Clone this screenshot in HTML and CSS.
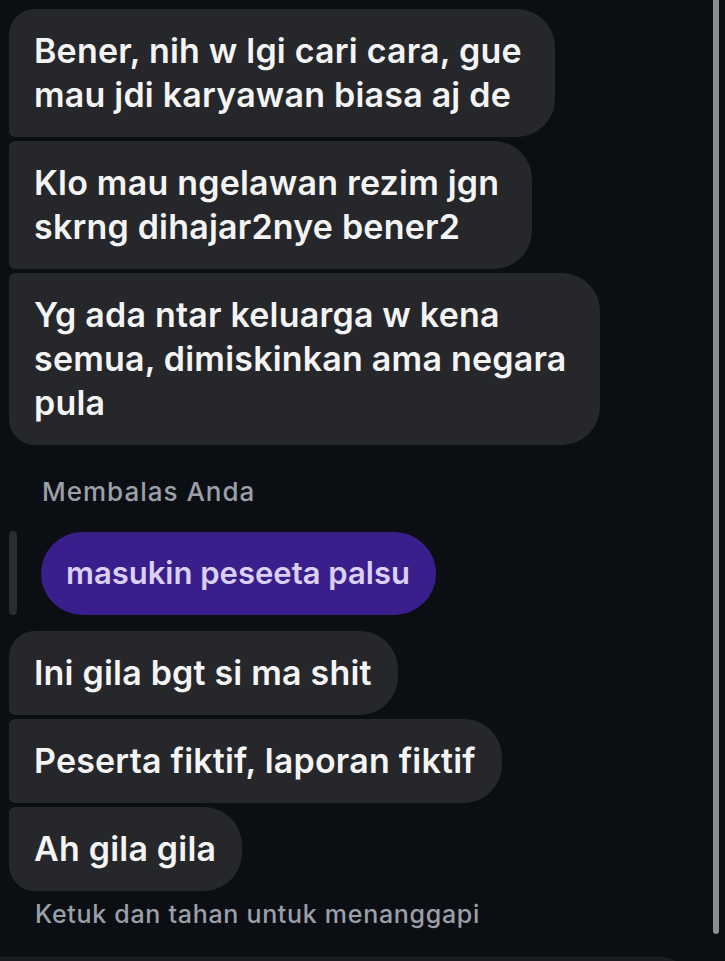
FILE: index.html
```html
<!DOCTYPE html>
<html lang="id">
<head>
    <meta charset="UTF-8">
    <meta name="viewport" content="width=device-width, initial-scale=1.0">
    <title>Pesan</title>
    <link rel="stylesheet" href="styles.css">
</head>
<body>
    <div class="thread">
        <div class="bubble first multi">Bener, nih w lgi cari cara, gue<br>mau jdi karyawan biasa aj de</div>
        <div class="bubble multi">Klo mau ngelawan rezim jgn<br>skrng dihajar2nye bener2</div>
        <div class="bubble last multi">Yg ada ntar keluarga w kena<br>semua, dimiskinkan ama negara<br>pula</div>

        <div class="reply-label">Membalas Anda</div>
        <div class="reply">
            <div class="reply-bar"></div>
            <div class="reply-bubble">masukin peseeta palsu</div>
        </div>

        <div class="bubble first">Ini gila bgt si ma shit</div>
        <div class="bubble">Peserta fiktif, laporan fiktif</div>
        <div class="bubble last">Ah gila gila</div>

        <div class="hint">Ketuk dan tahan untuk menanggapi</div>
    </div>

    <div class="composer"></div>
    <div class="scrollbar"></div>
</body>
</html>
```

FILE: styles.css
```css
body {
    margin: 0;
    height: 961px;
    overflow: hidden;
    background-color: #0b0f14;
    font-family: Inter, "Noto Sans", sans-serif;
    color: #f4f4f5;
}
.thread {
    display: flex;
    flex-direction: column;
    align-items: flex-start;
    gap: 4px;
    padding: 9px 0 0 9px;
}
.bubble {
    background-color: #25272b;
    font-size: 34px;
    font-weight: 600;
    line-height: 44px;
    letter-spacing: 0.2px;
    padding: 20px 26px 20px 25px;
    border-radius: 6px 38px 38px 6px;
    white-space: nowrap;
}
.bubble.multi {
    padding-right: 33px;
}
.bubble.first {
    border-top-left-radius: 26px;
}
.bubble.last {
    border-bottom-left-radius: 26px;
}
.reply-label {
    margin: 28px 0 0 33px;
    font-size: 26px;
    font-weight: 500;
    line-height: 30px;
    letter-spacing: 1px;
    color: #9ba0a8;
}
.reply {
    display: flex;
    align-items: stretch;
    margin: 21px 0 12px;
}
.reply-bar {
    width: 8px;
    border-radius: 4px;
    background-color: #2a2c30;
    margin-top: -1px;
}
.reply-bubble {
    margin-left: 24px;
    padding: 19px 26px 20px 25px;
    border-radius: 42px;
    background-color: #3a1f8c;
    color: #d9d0f3;
    font-size: 31px;
    font-weight: 600;
    line-height: 44px;
    letter-spacing: 0;
}
.hint {
    margin: 4px 0 0 26px;
    font-size: 25px;
    font-weight: 500;
    line-height: 30px;
    letter-spacing: 0.7px;
    color: #9ba0a8;
}
.composer {
    margin-top: 28px;
    width: 683px;
    height: 20px;
    background-color: #1b1d21;
    border-top-right-radius: 20px;
}
.scrollbar {
    position: fixed;
    top: 0;
    right: 6px;
    width: 6px;
    height: 934px;
    border-radius: 0 0 3px 3px;
    background-color: #8e8e8e;
}
```
